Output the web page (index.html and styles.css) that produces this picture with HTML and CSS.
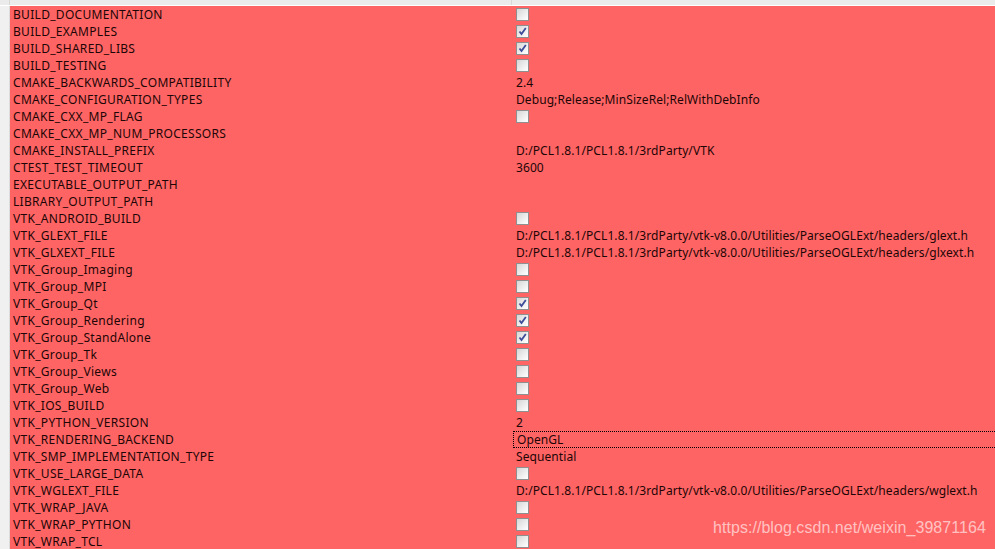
FILE: index.html
```html
<!DOCTYPE html>
<html lang="en">
<head>
    <meta charset="UTF-8">
    <title>CMake Cache</title>
    <link rel="stylesheet" href="styles.css">
</head>
<body>
    <div class="view">
        <div class="header">
            <div class="hcorner"></div>
            <div class="hname"></div>
            <div class="hvalue"></div>
        </div>
        <div class="body">
            <div class="gutter"></div>
            <div class="rows" id="rows"></div>
        </div>
        <div class="watermark">https://blog.csdn.net/weixin_39871164</div>
    </div>
    <script src="app.js"></script>
</body>
</html>
```

FILE: styles.css
```css
html, body {
    margin: 0;
    padding: 0;
    overflow: hidden;
}
body {
    font-family: "Noto Sans", "Noto Sans CJK SC", sans-serif;
    font-size: 12px;
    color: #1c0606;
    background: #ffffff;
}
.view {
    position: relative;
    width: 995px;
    height: 549px;
}
.header {
    display: flex;
    height: 5px;
    background: #ebebeb;
    border-bottom: 1px solid #ffffff;
}
.hcorner {
    width: 9px;
    border-right: 1px solid #d8d8d8;
}
.hname {
    width: 501px;
    border-right: 1px solid #d8d8d8;
}
.hvalue {
    flex: 1;
}
.body {
    display: flex;
}
.gutter {
    width: 9px;
    background: #f0f0f0;
    border-right: 1px solid #dcdcdc;
}
.rows {
    flex: 1;
    background: #ff6464;
}
.row {
    display: flex;
    height: 17px;
    line-height: 17px;
}
.name {
    width: 499px;
    padding-left: 3px;
    white-space: nowrap;
    letter-spacing: 0.3px;
}
.value {
    flex: 1;
    padding-left: 4px;
    white-space: nowrap;
    letter-spacing: 0.08px;
    display: flex;
    align-items: center;
}
.value.focus {
    margin-left: 1px;
    padding-left: 3px;
    border: 1px dotted #000000;
    border-right: none;
    height: 15px;
    line-height: 15px;
}
.check {
    width: 11px;
    height: 11px;
    border: 1px solid #8f8f8f;
    background: linear-gradient(135deg, #d6d6d6, #f4f4f4 70%, #ffffff);
    display: flex;
    align-items: center;
    justify-content: center;
}
.check svg {
    display: block;
}
.watermark {
    position: absolute;
    left: 713px;
    top: 519px;
    font-family: "Liberation Sans", Arial, sans-serif;
    font-size: 16px;
    letter-spacing: 0.05px;
    color: rgba(255, 255, 255, 0.62);
    white-space: nowrap;
}
```

FILE: app.js
```js
const entries = [
    ['BUILD_DOCUMENTATION', false],
    ['BUILD_EXAMPLES', true],
    ['BUILD_SHARED_LIBS', true],
    ['BUILD_TESTING', false],
    ['CMAKE_BACKWARDS_COMPATIBILITY', '2.4'],
    ['CMAKE_CONFIGURATION_TYPES', 'Debug;Release;MinSizeRel;RelWithDebInfo'],
    ['CMAKE_CXX_MP_FLAG', false],
    ['CMAKE_CXX_MP_NUM_PROCESSORS', ''],
    ['CMAKE_INSTALL_PREFIX', 'D:/PCL1.8.1/PCL1.8.1/3rdParty/VTK'],
    ['CTEST_TEST_TIMEOUT', '3600'],
    ['EXECUTABLE_OUTPUT_PATH', ''],
    ['LIBRARY_OUTPUT_PATH', ''],
    ['VTK_ANDROID_BUILD', false],
    ['VTK_GLEXT_FILE', 'D:/PCL1.8.1/PCL1.8.1/3rdParty/vtk-v8.0.0/Utilities/ParseOGLExt/headers/glext.h'],
    ['VTK_GLXEXT_FILE', 'D:/PCL1.8.1/PCL1.8.1/3rdParty/vtk-v8.0.0/Utilities/ParseOGLExt/headers/glxext.h'],
    ['VTK_Group_Imaging', false],
    ['VTK_Group_MPI', false],
    ['VTK_Group_Qt', true],
    ['VTK_Group_Rendering', true],
    ['VTK_Group_StandAlone', true],
    ['VTK_Group_Tk', false],
    ['VTK_Group_Views', false],
    ['VTK_Group_Web', false],
    ['VTK_IOS_BUILD', false],
    ['VTK_PYTHON_VERSION', '2'],
    ['VTK_RENDERING_BACKEND', 'OpenGL', true],
    ['VTK_SMP_IMPLEMENTATION_TYPE', 'Sequential'],
    ['VTK_USE_LARGE_DATA', false],
    ['VTK_WGLEXT_FILE', 'D:/PCL1.8.1/PCL1.8.1/3rdParty/vtk-v8.0.0/Utilities/ParseOGLExt/headers/wglext.h'],
    ['VTK_WRAP_JAVA', false],
    ['VTK_WRAP_PYTHON', false],
    ['VTK_WRAP_TCL', false]
];

const tick = '<svg width="9" height="9" viewBox="0 0 9 9"><path d="M1.5 4.5 L3.5 7 L7.8 1" fill="none" stroke="#3d4c99" stroke-width="1.8"/></svg>';

const rows = document.getElementById('rows');
for (const [name, value, focus] of entries) {
    const row = document.createElement('div');
    row.className = 'row';
    const n = document.createElement('div');
    n.className = 'name';
    n.textContent = name;
    const v = document.createElement('div');
    v.className = focus ? 'value focus' : 'value';
    if (typeof value === 'boolean') {
        const box = document.createElement('span');
        box.className = 'check';
        if (value) box.innerHTML = tick;
        v.appendChild(box);
    } else {
        v.textContent = value;
    }
    row.appendChild(n);
    row.appendChild(v);
    rows.appendChild(row);
}
```
